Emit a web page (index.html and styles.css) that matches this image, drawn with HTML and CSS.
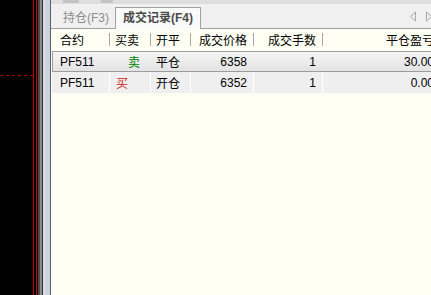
FILE: index.html
```html
<!DOCTYPE html>
<html lang="zh-CN">
<head>
    <meta charset="UTF-8">
    <title>成交记录</title>
    <link rel="stylesheet" href="styles.css">
</head>
<body>
    <div class="screen">
        <div class="chart"><div class="dash"></div></div>
        <div class="splitter"></div>
        <div class="panel">
            <div class="topstrip"><span class="stub"></span><span class="stub second"></span></div>
            <div class="tabbar">
                <div class="tab">持仓(F3)</div>
                <div class="tab active">成交记录(F4)</div>
                <div class="arrows">
                    <svg width="8" height="11" viewBox="0 0 8 11"><path d="M6.5 1 L1.5 5.5 L6.5 10 Z" fill="none" stroke="#a8a8a8"/></svg>
                    <svg width="8" height="11" viewBox="0 0 8 11"><path d="M1.5 1 L6.5 5.5 L1.5 10 Z" fill="none" stroke="#a8a8a8"/></svg>
                </div>
            </div>
            <table class="grid">
                <colgroup>
                    <col style="width:57px"><col style="width:41px"><col style="width:40px">
                    <col style="width:63px"><col style="width:69px"><col style="width:118px">
                </colgroup>
                <thead>
                    <tr>
                        <th class="left first">合约</th>
                        <th class="left">买卖</th>
                        <th class="left">开平</th>
                        <th>成交价格</th>
                        <th>成交手数</th>
                        <th>平仓盈亏</th>
                    </tr>
                </thead>
                <tbody>
                    <tr class="selected">
                        <td class="left first">PF511</td>
                        <td class="sell">卖</td>
                        <td class="left">平仓</td>
                        <td>6358</td>
                        <td>1</td>
                        <td>30.00</td>
                    </tr>
                    <tr>
                        <td class="left first">PF511</td>
                        <td class="left buy">买</td>
                        <td class="left">开仓</td>
                        <td>6352</td>
                        <td>1</td>
                        <td>0.00</td>
                    </tr>
                </tbody>
            </table>
        </div>
    </div>
</body>
</html>
```

FILE: styles.css
```css
body {
    margin: 0;
    background: #000;
    font-family: "Liberation Sans", "Noto Sans CJK SC", sans-serif;
    font-size: 12px;
    color: #000;
}
.screen {
    display: flex;
    width: 431px;
    height: 295px;
    overflow: hidden;
}
.chart {
    width: 33px;
    flex: none;
    background: #000;
}
.dash {
    margin-top: 75px;
    height: 1px;
    background: repeating-linear-gradient(90deg, #b00000 0 3px, transparent 3px 6px);
}
.splitter {
    width: 18px;
    flex: none;
    background: linear-gradient(90deg,
        #c80000 0 1px, #000 1px 3px, #c80000 3px 4px, #000 4px 5px,
        #4a4a4a 5px 7px, #8a8a8a 7px 9px, #2e2e2e 9px 10px,
        #dcdcdc 10px 12px, #c9d4e3 12px 17px, #5e5e5e 17px 18px);
}
.panel {
    flex: 1;
    background: #fffff3;
    overflow: hidden;
    display: flex;
    flex-direction: column;
}
.topstrip {
    height: 4px;
    background: #dedede;
    display: flex;
    gap: 22px;
    padding-left: 12px;
}
.stub {
    width: 16px;
    height: 3px;
    background: #c4c4c4;
}
.stub.second {
    width: 12px;
}
.tabbar {
    height: 24px;
    background: #f0f0f0;
    border-bottom: 1px solid #a0a0a0;
    display: flex;
    align-items: flex-end;
    padding-left: 6px;
}
.tab {
    width: 58px;
    height: 19px;
    line-height: 19px;
    text-align: center;
    color: #8c8c8c;
}
.tab.active {
    width: 84px;
    height: 21px;
    line-height: 21px;
    margin-bottom: -1px;
    background: #fafafa;
    border: 1px solid #a0a0a0;
    border-bottom: none;
    color: #4a4a4a;
    font-weight: bold;
}
.arrows {
    margin-left: auto;
    align-self: center;
    display: flex;
    gap: 8px;
    margin-right: -2px;
}
.arrows svg {
    display: block;
}
.grid {
    border-collapse: collapse;
    table-layout: fixed;
    width: 388px;
    margin-left: 1px;
}
.grid th {
    height: 20px;
    font-weight: normal;
    text-align: right;
    padding: 0 6px 0 0;
    border-bottom: 1px solid #b0b0b0;
    background: linear-gradient(#a8a8a8, #a8a8a8) left 4px / 1px 13px no-repeat;
    white-space: nowrap;
}
.grid th.left {
    text-align: left;
    padding: 0 0 0 6px;
}
.grid th.first {
    background: none;
    padding-left: 8px;
}
.grid td {
    height: 21px;
    padding: 0 6px 0 0;
    text-align: right;
    white-space: nowrap;
    background: #efefef;
    box-shadow: inset 1px 0 0 #fff;
}
.grid td.left {
    text-align: left;
    padding: 0 0 0 6px;
}
.grid td.first {
    padding-left: 8px;
    box-shadow: none;
}
.grid tr.selected td {
    background: linear-gradient(#f6f6f6, #e2e2e2);
    border-top: 2px solid #fffff3;
    box-shadow: inset 0 1px 0 #9c9c9c, inset 0 -1px 0 #9c9c9c;
}
.grid tr.selected td.first {
    box-shadow: inset 0 1px 0 #9c9c9c, inset 0 -1px 0 #9c9c9c, inset 1px 0 0 #9c9c9c;
}
.grid td.sell {
    color: #008000;
    padding-right: 10px;
}
.grid td.buy {
    color: #d02020;
    padding-left: 7px;
}
```
